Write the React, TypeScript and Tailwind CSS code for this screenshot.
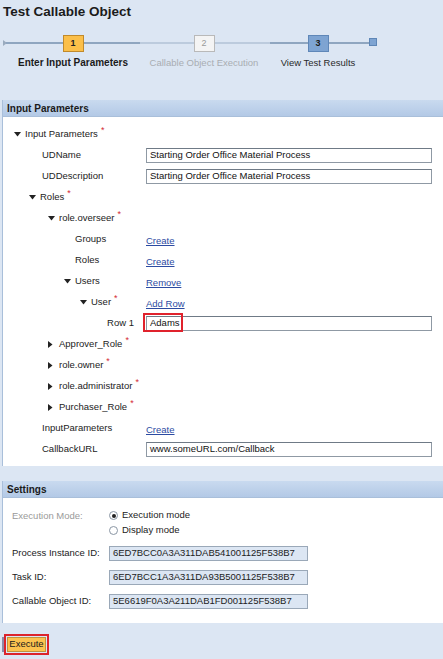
import React from 'react';

type Node = {
  label: string;
  pad: string;
  arrow?: 'down' | 'right';
  required?: boolean;
  value?: React.ReactNode;
  alignRight?: boolean;
};

const Star = () => (
  <span className="relative -top-[4px] ml-[3px] text-[9px] leading-none text-[#d42a35]">*</span>
);

const Arrow = ({ dir }: { dir: 'down' | 'right' }) => (
  <span className="inline-flex w-[11px] shrink-0 items-center">
    {dir === 'down' ? (
      <svg width="7" height="5" viewBox="0 0 7 5">
        <polygon points="0,0 7,0 3.5,4.5" fill="#222" />
      </svg>
    ) : (
      <svg width="5" height="7" viewBox="0 0 5 7">
        <polygon points="0,0 4.5,3.5 0,7" fill="#222" />
      </svg>
    )}
  </span>
);

const TextField = ({ value, marked }: { value: string; marked?: boolean }) => (
  <div className="relative flex h-[15px] w-[286px] items-center border border-[#8f99a4] border-t-[#6f7a86] bg-white pl-[3px] text-[9.5px] text-[#111]">
    {value}
    {marked && (
      <span className="absolute -left-[4px] -top-[4px] h-[19px] w-[40px] border-2 border-[#e0222c]" />
    )}
  </div>
);

const Link = ({ children }: { children: React.ReactNode }) => (
  <span className="mt-[3px] text-[9.5px] text-[#2c4ba2] underline">{children}</span>
);

const ReadOnly = ({ value }: { value: string }) => (
  <div className="flex h-[15px] w-[199px] items-center border border-[#9aa8b8] bg-[#dce6f3] pl-[3px] text-[9.5px] text-[#222]">
    {value}
  </div>
);

const tree: Node[] = [
  { label: 'Input Parameters', pad: 'pl-[11px]', arrow: 'down', required: true },
  { label: 'UDName', pad: 'pl-[39px]', value: <TextField value="Starting Order Office Material Process" /> },
  { label: 'UDDescription', pad: 'pl-[39px]', value: <TextField value="Starting Order Office Material Process" /> },
  { label: 'Roles', pad: 'pl-[26px]', arrow: 'down', required: true },
  { label: 'role.overseer', pad: 'pl-[45px]', arrow: 'down', required: true },
  { label: 'Groups', pad: 'pl-[72px]', value: <Link>Create</Link> },
  { label: 'Roles', pad: 'pl-[72px]', value: <Link>Create</Link> },
  { label: 'Users', pad: 'pl-[61px]', arrow: 'down', value: <Link>Remove</Link> },
  { label: 'User', pad: 'pl-[77px]', arrow: 'down', required: true, value: <Link>Add Row</Link> },
  { label: 'Row 1', pad: 'pr-[12px]', alignRight: true, value: <TextField value="Adams" marked /> },
  { label: 'Approver_Role', pad: 'pl-[45px]', arrow: 'right', required: true },
  { label: 'role.owner', pad: 'pl-[45px]', arrow: 'right', required: true },
  { label: 'role.administrator', pad: 'pl-[45px]', arrow: 'right', required: true },
  { label: 'Purchaser_Role', pad: 'pl-[45px]', arrow: 'right', required: true },
  { label: 'InputParameters', pad: 'pl-[39px]', value: <Link>Create</Link> },
  { label: 'CallbackURL', pad: 'pl-[39px]', value: <TextField value="www.someURL.com/Callback" /> },
];

const SectionHeader = ({ title }: { title: string }) => (
  <div className="flex h-[17px] items-center border-b border-[#a9bfda] bg-gradient-to-b from-[#c9daef] to-[#b3c9e6] pl-[4px] text-[10px] font-bold text-[#1b1b1b]">
    {title}
  </div>
);

const Roadmap = () => (
  <div className="relative h-[80px]">
    <svg className="absolute left-0 top-0" width="443" height="40">
      <polygon points="3,20 7,23 3,26" fill="#9aabbe" />
      <rect x="6" y="22" width="134" height="2" fill="#8fa6c0" />
      <rect x="140" y="22" width="130" height="2" fill="#bccbdd" />
      <rect x="270" y="22" width="100" height="2" fill="#8fa6c0" />
      <rect x="369.5" y="18.5" width="7" height="7" fill="#7ea4d2" stroke="#5e86b6" />
    </svg>
    <div className="relative flex pl-[21px] pt-[15px]">
      <div className="flex w-[104px] flex-col items-center">
        <div className="flex h-[17px] w-[21px] items-center justify-center border border-[#c18a2b] bg-[#fbbf49] text-[9px] font-bold text-[#222]">
          1
        </div>
        <div className="mt-[5px] whitespace-nowrap text-[10px] font-bold leading-[12px] text-[#1b1b1b]">
          Enter Input Parameters
        </div>
      </div>
      <div className="ml-[27px] flex w-[104px] flex-col items-center">
        <div className="flex h-[17px] w-[21px] items-center justify-center border border-[#b9b9b9] bg-[#f4f4f4] text-[9px] text-[#9a9a9a]">
          2
        </div>
        <div className="mt-[5px] whitespace-nowrap text-[9.5px] leading-[12px] text-[#a9adb2]">
          Callable Object Execution
        </div>
      </div>
      <div className="ml-[10px] flex w-[104px] flex-col items-center">
        <div className="flex h-[17px] w-[21px] items-center justify-center border border-[#5f87b8] bg-[#7ea4d2] text-[9px] font-bold text-[#1b1b1b]">
          3
        </div>
        <div className="mt-[5px] whitespace-nowrap text-[9.5px] leading-[12px] text-[#2a2a2a]">
          View Test Results
        </div>
      </div>
    </div>
  </div>
);

const Radio = ({ checked, label }: { checked?: boolean; label: string }) => (
  <div className="flex h-[15px] items-center">
    <span className="flex h-[9px] w-[9px] items-center justify-center rounded-full border border-[#8a96a4] bg-white">
      {checked && <span className="h-[4px] w-[4px] rounded-full bg-[#222]" />}
    </span>
    <span className="ml-[4px] text-[9.5px] text-[#222]">{label}</span>
  </div>
);

export default function App() {
  return (
    <div className="h-[659px] w-[443px] overflow-hidden bg-[#dce6f3] font-['Liberation_Sans',Arial,sans-serif] text-[#222]">
      <h1 className="pl-[3px] pt-[3px] text-[13.5px] font-bold leading-[17px] text-[#1b1b1b]">
        Test Callable Object
      </h1>

      <Roadmap />

      <div className="ml-[2px] border-l border-[#a9bfda]">
        <SectionHeader title="Input Parameters" />
        <div className="bg-white pb-[6px] pt-[7px]">
          {tree.map((n, i) => (
            <div key={i} className="flex h-[21px] items-center">
              <div
                className={`flex w-[143px] shrink-0 items-center text-[9.5px] text-[#222] ${n.pad} ${
                  n.alignRight ? 'justify-end' : ''
                }`}
              >
                {n.arrow && <Arrow dir={n.arrow} />}
                <span>{n.label}</span>
                {n.required && <Star />}
              </div>
              {n.value}
            </div>
          ))}
        </div>
      </div>

      <div className="ml-[2px] mt-[15px] border-l border-[#a9bfda]">
        <SectionHeader title="Settings" />
        <div className="bg-white pb-[10px] pt-[10px]">
          <div className="flex">
            <div className="w-[106px] shrink-0 pl-[9px] pt-[1px] text-[9.5px] leading-[13px] text-[#9a9a9a]">
              Execution Mode:
            </div>
            <div className="flex flex-col">
              <Radio checked label="Execution mode" />
              <Radio label="Display mode" />
            </div>
          </div>
          <div className="mt-[3px]">
            {[
              ['Process Instance ID:', '6ED7BCC0A3A311DAB541001125F538B7'],
              ['Task ID:', '6ED7BCC1A3A311DA93B5001125F538B7'],
              ['Callable Object ID:', '5E6619F0A3A211DAB1FD001125F538B7'],
            ].map(([label, value]) => (
              <div key={label} className="flex h-[24px] items-center">
                <div className="w-[106px] shrink-0 pl-[9px] text-[9.5px] text-[#222]">{label}</div>
                <ReadOnly value={value} />
              </div>
            ))}
          </div>
        </div>
      </div>

      <div className="flex items-center pl-[2px] pt-[11px]">
        <div className="h-[15px] w-[2px] bg-[#8d8aa8]" />
        <div className="border-2 border-[#dc242c] p-[1px]">
          <div className="flex h-[15px] w-[39px] items-center justify-center border border-[#c0943e] bg-[#fcc24f] text-[9.5px] text-[#1b1b1b]">
            Execute
          </div>
        </div>
      </div>
    </div>
  );
}
